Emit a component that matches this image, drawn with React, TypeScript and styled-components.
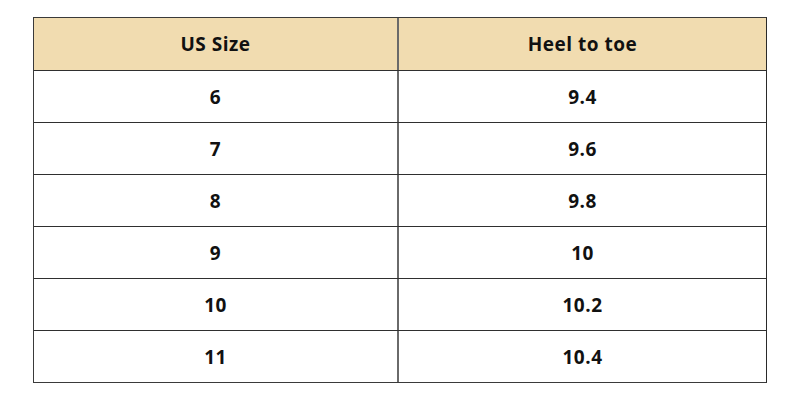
import styled, { createGlobalStyle } from "styled-components"

const GlobalStyle = createGlobalStyle`
    html, body {
        margin: 0;
        padding: 0;
        background: #ffffff;
    }
    body {
        font-family: "Open Sans", "Noto Sans", sans-serif;
    }
`

const Page = styled.div`
    width: 800px;
    height: 400px;
    padding: 17px 0 0 33px;
    box-sizing: border-box;
`

const Table = styled.div`
    width: 734px;
    border: 1.5px solid #3a3a3a;
    border-right-color: #2a2a2a;
    box-sizing: border-box;
`

const Row = styled.div<{ $head?: boolean }>`
    display: grid;
    grid-template-columns: 363px 1fr;
    height: 52px;
    box-sizing: border-box;
    background: ${p => (p.$head ? "#f1dcb0" : "#ffffff")};
    & + & {
        border-top: 1.5px solid #2f2f2f;
    }
`

const Cell = styled.div`
    display: flex;
    align-items: center;
    justify-content: center;
    font-size: 19px;
    font-weight: 700;
    color: #111111;
    letter-spacing: 0.5px;
    & + & {
        border-left: 2px solid #6a6a6a;
    }
`

const sizes = [
    ["6", "9.4"],
    ["7", "9.6"],
    ["8", "9.8"],
    ["9", "10"],
    ["10", "10.2"],
    ["11", "10.4"],
]

export default function App() {
    return (
        <Page>
            <GlobalStyle />
            <Table>
                <Row $head>
                    <Cell>US Size</Cell>
                    <Cell>Heel to toe</Cell>
                </Row>
                {sizes.map(([us, len]) => (
                    <Row key={us}>
                        <Cell>{us}</Cell>
                        <Cell>{len}</Cell>
                    </Row>
                ))}
            </Table>
        </Page>
    )
}
